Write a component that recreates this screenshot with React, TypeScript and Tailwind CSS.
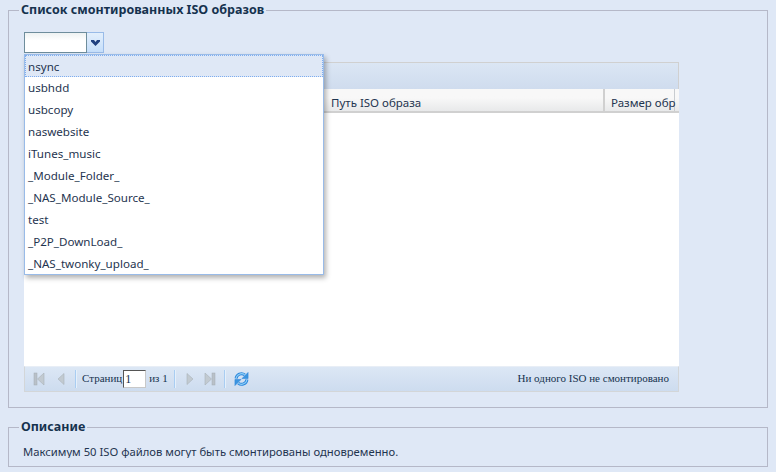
const items = [
  "nsync",
  "usbhdd",
  "usbcopy",
  "naswebsite",
  "iTunes_music",
  "_Module_Folder_",
  "_NAS_Module_Source_",
  "test",
  "_P2P_DownLoad_",
  "_NAS_twonky_upload_",
];

function PageIcon({ dir, end }: { dir: "left" | "right"; end?: boolean }) {
  return (
    <svg width="12" height="16" viewBox="0 0 12 16" className={dir === "right" ? "-scale-x-100" : ""}>
      {end && <rect x="1" y="2" width="3" height="12" fill="#b9c1c9" stroke="#a3abb3" strokeWidth="0.5" />}
      <path d={end ? "M11 2v12L4.5 8z" : "M9 2.5v11L3 8z"} fill="#c2cad1" stroke="#a9b1b9" strokeWidth="0.6" />
    </svg>
  );
}

function RefreshIcon() {
  const half = (
    <>
      <path d="M2.2 7.5A5.8 5.8 0 0 1 11.5 3.6" fill="none" stroke="#2c86dc" strokeWidth="3.2" />
      <path d="M2.2 7.5A5.8 5.8 0 0 1 11.5 3.6" fill="none" stroke="#8fd0f7" strokeWidth="1.2" />
      <path d="M15 1v6.5H8.5z" fill="#3a94e0" stroke="#2c86dc" strokeWidth="0.6" />
    </>
  );
  return (
    <svg width="15" height="16" viewBox="0 0 16 16" className="ml-[8px]">
      {half}
      <g transform="rotate(180 8 8)">{half}</g>
    </svg>
  );
}

function Sep() {
  return <div className="w-[2px] h-[18px] bg-[#a9cdf2] border-r border-white/70" />;
}

export default function App() {
  return (
    <div className="relative w-[776px] h-[472px] overflow-hidden bg-[#dfe8f6] px-2 pt-[1px] font-['Noto_Sans',sans-serif] text-[#15324e]">
      <fieldset className="h-[407px] border border-[#b5b8c8] pl-[15px] pr-[88px] pt-[13px]">
        <legend className="px-[2px] -ml-[5px] text-[12.5px] leading-[18px] font-bold text-[#15324e]">
          Список смонтированных ISO образов
        </legend>

        <div className="flex h-[21px] w-[80px]">
          <div className="w-[63px] h-[21px] border border-[#6e8d9c] bg-gradient-to-b from-[#eef2f2] to-white to-40%" />
          <div className="flex-1 flex items-center justify-center border border-l-0 border-[#99bbe8] bg-gradient-to-b from-[#e3effc] to-[#c5defa]">
            <svg width="9" height="6" viewBox="0 0 9 6">
              <path d="M0 0h3l1.5 2L6 0h3v1.5L4.5 6 0 1.5z" fill="#1f4080" />
            </svg>
          </div>
        </div>

        <div className="mt-[9px] w-[655px] h-[330px] flex flex-col bg-white">
          <div className="h-[27px] border border-b-0 border-[#d0d0d0] bg-gradient-to-b from-[#dbe6f4] to-[#cfdcee]" />
          <div className="h-[24px] flex bg-gradient-to-b from-[#f8f8f8] from-40% to-[#e8e9ea] border-b-2 border-[#d0d0d0] text-[11.5px] leading-[18px] text-[#1f3550]">
            <div className="w-[300px] shrink-0 border-r border-[#c8ccd0]" />
            <div className="w-[281px] shrink-0 pl-[7px] pt-[5px] border-r-2 border-[#d0d0d0]">Путь ISO образа</div>
            <div className="w-[70px] shrink-0 pl-[6px] pt-[5px] whitespace-nowrap border-r border-[#c8ccd0]">Размер обр</div>
          </div>
          <div className="flex-1 bg-white" />
          <div className="h-[26px] flex items-center pl-[8px] pr-[9px] pb-[1px] border border-[#d3d6d8] border-t-[#e8eef6] bg-gradient-to-b from-[#dce7f5] to-[#cddcef] font-['Liberation_Serif',serif] text-[11px] text-[#15324e]">
            <PageIcon dir="left" end />
            <div className="w-[10px]" />
            <PageIcon dir="left" />
            <div className="w-[8px]" />
            <Sep />
            <span className="ml-[5px]">Страниц</span>
            <div className="ml-[1px] w-[23px] h-[18px] border border-[#555] border-r-[#c8c8c8] border-b-[#c8c8c8] bg-white pl-[1px] text-[12px] leading-[16px]">1</div>
            <span className="ml-[3px]">из 1</span>
            <div className="w-[6px]" />
            <Sep />
            <div className="w-[8px]" />
            <PageIcon dir="right" />
            <div className="w-[8px]" />
            <PageIcon dir="right" end />
            <div className="w-[8px]" />
            <Sep />
            <RefreshIcon />
            <span className="ml-auto">Ни одного ISO не смонтировано</span>
          </div>
        </div>
      </fieldset>

      <fieldset className="mt-[10px] h-[49px] border border-[#b5b8c8] pl-[15px]">
        <legend className="px-[2px] -ml-[5px] text-[12.5px] leading-[18px] font-bold text-[#15324e]">
          Описание
        </legend>
        <div className="mt-[8px] -ml-[1px] h-[14px] overflow-hidden">
          <p className="text-[11.25px] leading-[16px] text-[#1f3550]">
            Максимум 50 ISO файлов могут быть смонтированы одновременно.
          </p>
        </div>
      </fieldset>

      <div className="absolute left-[24px] top-[54px] w-[300px] h-[221px] bg-white border border-[#99bbe8] shadow-[2px_3px_5px_rgba(0,0,0,0.3)] text-[11.6px] text-[#1f3550]">
        {items.map((item, i) => (
          <div
            key={item}
            className={
              i === 0
                ? "h-[22px] pl-[2px] leading-[21px] bg-[#dfe8f6] border border-dotted border-[#7eadf0]"
                : "h-[22px] pl-[3px] leading-[22px]"
            }
          >
            {item}
          </div>
        ))}
      </div>
    </div>
  );
}
